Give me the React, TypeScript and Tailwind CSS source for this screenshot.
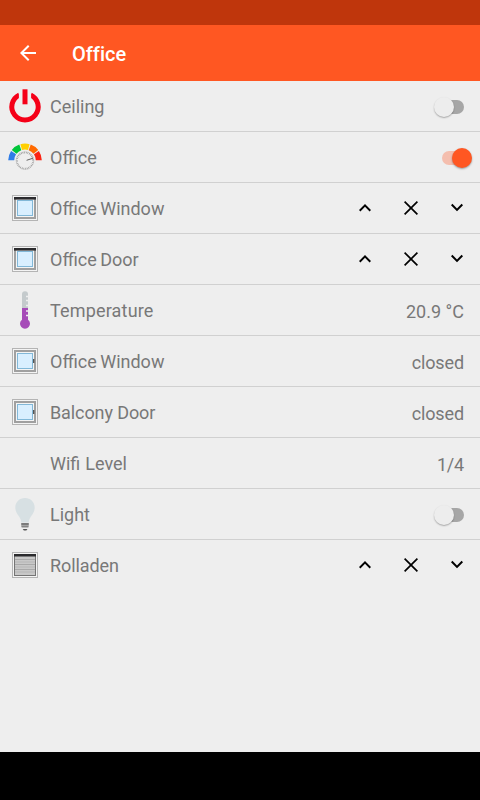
import React from "react";

type IconName = "power" | "gauge" | "shutter" | "thermo" | "contact" | "none" | "bulb" | "rolladen";
type Control =
  | { type: "switch"; on: boolean }
  | { type: "shutter" }
  | { type: "text"; value: string; spacing?: string };

const items: { icon: IconName; label: string; control: Control; spacing?: string }[] = [
  { icon: "power", label: "Ceiling", control: { type: "switch", on: false } },
  { icon: "gauge", label: "Office", control: { type: "switch", on: true } },
  { icon: "shutter", label: "Office Window", control: { type: "shutter" }, spacing: "[word-spacing:-1px]" },
  { icon: "shutter", label: "Office Door", control: { type: "shutter" }, spacing: "[word-spacing:-1px]" },
  { icon: "thermo", label: "Temperature", control: { type: "text", value: "20.9 °C" }, spacing: "tracking-[0.17px]" },
  {
    icon: "contact",
    label: "Office Window",
    control: { type: "text", value: "closed", spacing: "tracking-[-0.12px]" },
    spacing: "[word-spacing:-1px]",
  },
  {
    icon: "contact",
    label: "Balcony Door",
    control: { type: "text", value: "closed", spacing: "tracking-[-0.12px]" },
    spacing: "tracking-[-0.1px]",
  },
  {
    icon: "none",
    label: "Wifi Level",
    control: { type: "text", value: "1/4", spacing: "tracking-[-0.2px]" },
    spacing: "[word-spacing:0.5px]",
  },
  { icon: "bulb", label: "Light", control: { type: "switch", on: false } },
  { icon: "rolladen", label: "Rolladen", control: { type: "shutter" }, spacing: "tracking-[-0.1px]" },
];

const arcColors = ["#2f7de8", "#00c63a", "#ffcf00", "#ff6a00", "#fb2313"];

function arcSegment(i: number) {
  const cx = 25;
  const cy = 28.3;
  const r = 13.8;
  const a0 = Math.PI + (i * Math.PI) / 5 + (i === 0 ? 0 : 0.035);
  const a1 = Math.PI + ((i + 1) * Math.PI) / 5 - (i === 4 ? 0 : 0.035);
  const p = (a: number) => `${(cx + r * Math.cos(a)).toFixed(2)} ${(cy + r * Math.sin(a)).toFixed(2)}`;
  return `M${p(a0)}A${r} ${r} 0 0 1 ${p(a1)}`;
}

function WindowFrame() {
  return (
    <>
      <rect x="12.5" y="12.5" width="25" height="25" fill="#f4f4f4" stroke="#b4b4b4" />
      <rect x="15" y="15" width="20" height="20" fill="#f4f4f4" stroke="#a0a0a0" strokeWidth="2" />
      <rect x="17.5" y="17.5" width="15" height="15" fill="#d9efff" stroke="#82b8d8" />
    </>
  );
}

function ItemIcon({ name }: { name: IconName }) {
  return (
    <svg width="50" height="50" viewBox="0 0 50 50" fill="none" className="shrink-0">
      {name === "power" && (
        <>
          <path d="M19.3 13.9A13.2 13.2 0 1 0 30.7 13.9" stroke="#f50018" strokeWidth="5" />
          <path d="M18.9 9.5h2.2v8h-2.2zM28.9 9.5h2.2v8h-2.2z" fill="#eeeeee" />
          <rect x="22.5" y="8.3" width="5" height="15" fill="#f50018" />
        </>
      )}
      {name === "gauge" && (
        <>
          {arcColors.map((c, i) => (
            <path key={c} d={arcSegment(i)} stroke={c} strokeWidth="6" />
          ))}
          <circle cx="25" cy="28.6" r="9.8" fill="#eeeeee" />
          <circle cx="25" cy="28.6" r="8.9" stroke="#b5b5b5" strokeWidth="0.5" />
          <circle cx="25" cy="28.6" r="8" stroke="#8a8a8a" strokeWidth="1.6" strokeDasharray="0.6 1.07" />
          <path d="M26.6 28.3L33 26.2" stroke="#505050" strokeWidth="0.9" />
        </>
      )}
      {name === "shutter" && (
        <>
          <WindowFrame />
          <rect x="14" y="14" width="22" height="2.6" fill="#2a2a2d" />
        </>
      )}
      {name === "contact" && (
        <>
          <WindowFrame />
          <rect x="33" y="23" width="1.4" height="4" fill="#555555" />
        </>
      )}
      {name === "thermo" && (
        <>
          <path d="M22 23V9.2a3 3 0 0 1 6 0V23z" fill="#c4cacc" />
          <path d="M22 23h6v11.7a5 5 0 1 1-6 0z" fill="#a64bb8" />
          <path d="M26 11.5h2.4M26 15.5h2.4M26 20.5h2.4M26 26h2.4M26 30.5h2.4" stroke="#eeeeee" strokeWidth="1.3" />
        </>
      )}
      {name === "bulb" && (
        <>
          <path
            d="M25 9c-5.6 0-9.7 4.2-9.7 9.5 0 3.7 1.8 6.2 3.6 8.8 1.4 2.2 2.2 3.9 2.4 6.3h7.4c.2-2.4 1-4.1 2.4-6.3 1.8-2.6 3.6-5.1 3.6-8.8C34.7 13.2 30.6 9 25 9z"
            fill="#d7e0e3"
          />
          <path d="M21.2 34h7.6v2h-7.6z" fill="#7b7b7b" />
          <path d="M21.2 36h7.6v1h-7.6z" fill="#a5a5a5" />
          <path d="M21.2 37h7.6l-.5 1.6h-6.6z" fill="#858585" />
          <path d="M22.7 39.9h4.8l-1.2 1.7h-2.4z" fill="#555555" />
        </>
      )}
      {name === "rolladen" && (
        <>
          <rect x="12.5" y="12.5" width="25" height="25" fill="#f4f4f4" stroke="#b4b4b4" />
          <rect x="14.5" y="14.5" width="21" height="21" fill="#c8c8c8" stroke="#747474" />
          <path d="M15 19.5h20M15 24.5h20M15 29.5h20" stroke="#a9a9a9" />
          <path d="M15 22h20M15 27h20M15 32h20" stroke="#b6b6b6" />
          <rect x="14" y="14" width="22" height="2.5" fill="#2a2a2d" />
        </>
      )}
    </svg>
  );
}

function Switch({ on }: { on: boolean }) {
  return on ? (
    <div className="relative mt-[1px] mr-[8px] h-[14px] w-[30px]">
      <div className="h-[14px] w-[28px] rounded-full bg-[#f4beae]" />
      <div className="absolute top-[-3px] left-[10px] size-[20px] rounded-full bg-[#ff5722] shadow-[0_1px_2px_rgba(0,0,0,0.35)]" />
    </div>
  ) : (
    <div className="relative mt-[1px] mr-[16px] h-[14px] w-[28px]">
      <div className="h-[14px] w-[28px] rounded-full bg-[#a6a6a6]" />
      <div className="absolute top-[-3px] left-[-2.5px] size-[20px] rounded-full bg-[#ededed] shadow-[0_1px_1.5px_rgba(0,0,0,0.3)]" />
    </div>
  );
}

function Glyph({ d }: { d: string }) {
  return (
    <svg width="24" height="24" viewBox="0 0 24 24" fill="#000000">
      <path d={d} />
    </svg>
  );
}

function ShutterButtons() {
  return (
    <div className="mr-[11px] flex gap-[22px]">
      <Glyph d="M7.41 15.41L12 10.83l4.59 4.58L18 14l-6-6-6 6z" />
      <Glyph d="M19 6.2L17.8 5 12 10.8 6.2 5 5 6.2 10.8 12 5 17.8 6.2 19 12 13.2 17.8 19 19 17.8 13.2 12z" />
      <Glyph d="M7.41 7.84L12 12.42l4.59-4.58L18 9.25l-6 6-6-6z" />
    </div>
  );
}

export default function App() {
  return (
    <div className="flex h-[800px] w-[480px] flex-col overflow-hidden bg-[#eeeeee] font-['Roboto',sans-serif]">
      <div className="h-[25px] shrink-0 bg-[#bf360c]" />
      <header className="flex h-[56px] shrink-0 items-center bg-[#ff5722] pl-[16px] text-white">
        <svg width="24" height="24" viewBox="0 0 24 24" fill="currentColor">
          <path d="M20 11H7.83l5.59-5.59L12 4l-8 8 8 8 1.41-1.41L7.83 13H20v-2z" />
        </svg>
        <h1 className="mt-[2px] ml-[32px] text-[20px] leading-[24px] font-medium tracking-[0.01px]">Office</h1>
      </header>
      <main className="flex-1">
        {items.map((item, i) => (
          <div
            key={i}
            className="flex h-[51px] items-center border-b border-[#d0d0d0] text-[18px] leading-[21px] text-[#787878] last:border-transparent"
          >
            <ItemIcon name={item.icon} />
            <span className={`flex-1 ${item.spacing ?? ""}`}>{item.label}</span>
            {item.control.type === "switch" && <Switch on={item.control.on} />}
            {item.control.type === "shutter" && <ShutterButtons />}
            {item.control.type === "text" && (
              <span className={`mt-[2px] mr-[16px] ${item.control.spacing ?? ""}`}>{item.control.value}</span>
            )}
          </div>
        ))}
      </main>
      <div className="h-[48px] shrink-0 bg-black" />
    </div>
  );
}
